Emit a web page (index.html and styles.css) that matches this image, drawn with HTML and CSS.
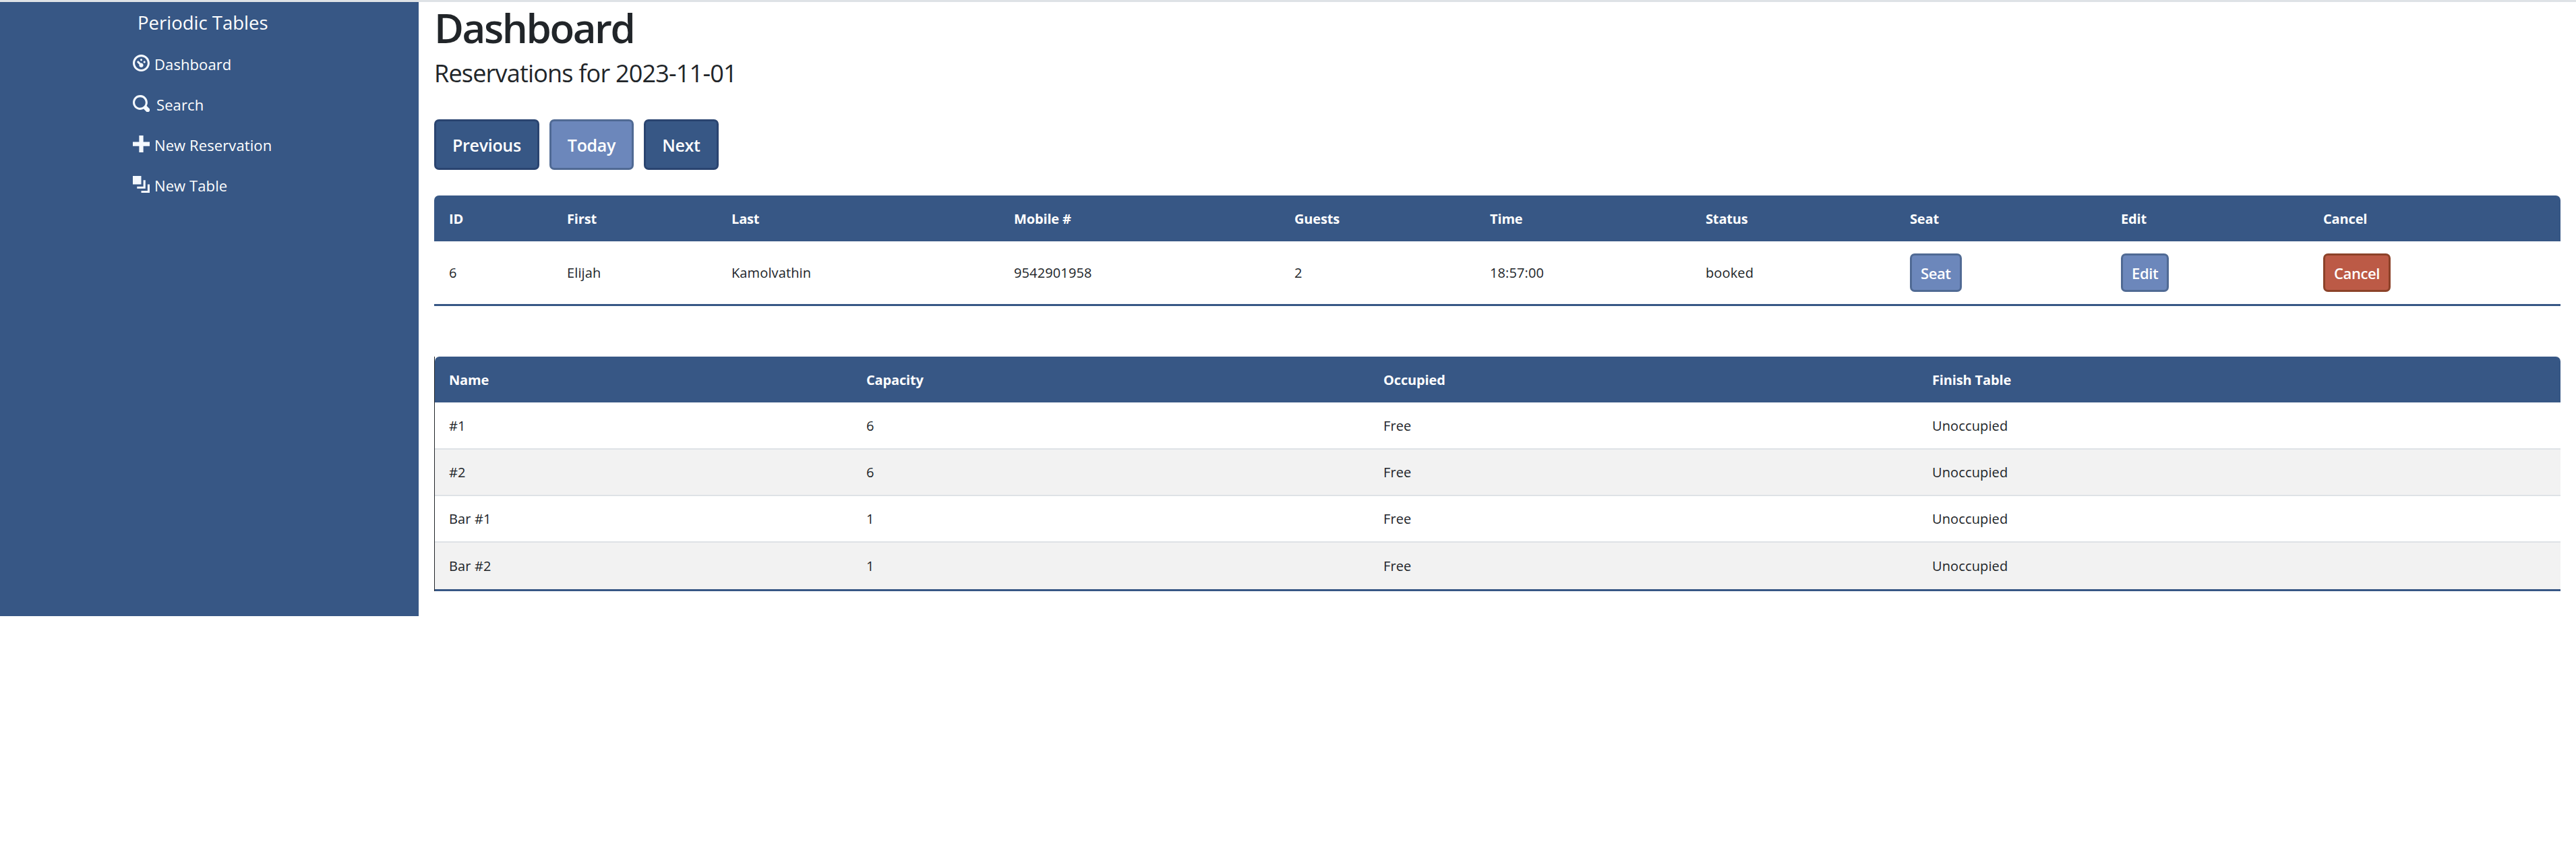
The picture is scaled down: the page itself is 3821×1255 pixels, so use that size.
FILE: index.html
```html
<!DOCTYPE html>
<html lang="en">

<head>
    <meta charset="UTF-8">
    <title>Periodic Tables</title>
    <link rel="stylesheet" href="styles.css">
</head>

<body>
    <div id="app">
        <!--SIDEBAR-->
        <nav class="sidebar">
            <div class="brand">Periodic Tables</div>
            <a class="nav-link" href="#">
                <svg class="nav-icon" viewBox="0 0 8 8"><path d="M4 0c-2.2 0-4 1.8-4 4s1.8 4 4 4 4-1.8 4-4-1.8-4-4-4zm0 1c1.66 0 3 1.34 3 3s-1.34 3-3 3-3-1.34-3-3 1.34-3 3-3zm0 1c-.28 0-.5.22-.5.5s.22.5.5.5.5-.22.5-.5-.22-.5-.5-.5zm-1.66 1a.5.5 0 0 0-.19.84l.91.91c-.02.08-.06.16-.06.25 0 .55.45 1 1 1s1-.45 1-1-.45-1-1-1c-.09 0-.17.04-.25.06l-.91-.91a.5.5 0 0 0-.44-.16.5.5 0 0 0-.06 0zm3.16 0c-.28 0-.5.22-.5.5s.22.5.5.5.5-.22.5-.5-.22-.5-.5-.5z"/></svg>
                Dashboard
            </a>
            <a class="nav-link nav-link-search" href="#">
                <svg class="nav-icon" viewBox="0 0 8 8"><path d="M3.5 0c-1.93 0-3.5 1.57-3.5 3.5s1.57 3.5 3.5 3.5c.59 0 1.17-.14 1.66-.41a1 1 0 0 0 .13.13l1 1a1.02 1.02 0 1 0 1.44-1.44l-1-1a1 1 0 0 0-.16-.13c.27-.49.44-1.06.44-1.66 0-1.93-1.57-3.5-3.5-3.5zm0 1c1.39 0 2.5 1.11 2.5 2.5 0 .66-.24 1.27-.66 1.72-.01.01-.02.02-.03.03a1 1 0 0 0-.13.13c-.44.4-1.04.63-1.69.63-1.39 0-2.5-1.11-2.5-2.5s1.11-2.5 2.5-2.5z"/></svg>
                Search
            </a>
            <a class="nav-link" href="#">
                <svg class="nav-icon" viewBox="0 0 8 8"><path d="M3 0v3h-3v2h3v3h2v-3h3v-2h-3v-3h-2z"/></svg>
                New Reservation
            </a>
            <a class="nav-link" href="#">
                <svg class="nav-icon" viewBox="0 0 8 8"><path d="M0 0v4h4v-4h-4zm5 2v3h-3v1h4v-4h-1zm2 2v3h-3v1h4v-4h-1z"/></svg>
                New Table
            </a>
        </nav>

        <main class="content">
            <h1>Dashboard</h1>
            <h4>Reservations for 2023-11-01</h4>

            <div class="date-nav">
                <button class="btn btn-dark-blue">Previous</button>
                <button class="btn btn-light-blue">Today</button>
                <button class="btn btn-dark-blue">Next</button>
            </div>

            <!--RESERVATIONS-->
            <table class="data-table reservations">
                <thead>
                    <tr>
                        <th>ID</th>
                        <th>First</th>
                        <th>Last</th>
                        <th>Mobile #</th>
                        <th>Guests</th>
                        <th>Time</th>
                        <th>Status</th>
                        <th>Seat</th>
                        <th>Edit</th>
                        <th>Cancel</th>
                    </tr>
                </thead>
                <tbody>
                    <tr>
                        <td>6</td>
                        <td>Elijah</td>
                        <td>Kamolvathin</td>
                        <td>9542901958</td>
                        <td>2</td>
                        <td>18:57:00</td>
                        <td>booked</td>
                        <td><button class="btn-small btn-light-blue">Seat</button></td>
                        <td><button class="btn-small btn-light-blue">Edit</button></td>
                        <td><button class="btn-small btn-red">Cancel</button></td>
                    </tr>
                </tbody>
            </table>

            <!--TABLES-->
            <table class="data-table tables">
                <thead>
                    <tr>
                        <th>Name</th>
                        <th>Capacity</th>
                        <th>Occupied</th>
                        <th>Finish Table</th>
                    </tr>
                </thead>
                <tbody>
                    <tr>
                        <td>#1</td>
                        <td>6</td>
                        <td>Free</td>
                        <td>Unoccupied</td>
                    </tr>
                    <tr>
                        <td>#2</td>
                        <td>6</td>
                        <td>Free</td>
                        <td>Unoccupied</td>
                    </tr>
                    <tr>
                        <td>Bar #1</td>
                        <td>1</td>
                        <td>Free</td>
                        <td>Unoccupied</td>
                    </tr>
                    <tr>
                        <td>Bar #2</td>
                        <td>1</td>
                        <td>Free</td>
                        <td>Unoccupied</td>
                    </tr>
                </tbody>
            </table>
        </main>
    </div>
</body>

</html>
```

FILE: styles.css
```css
* {
    margin: 0;
    padding: 0;
    box-sizing: border-box;
}

body {
    font-family: "Open Sans", sans-serif;
    background: #fff;
    color: #212529;
}

#app {
    display: flex;
    align-items: flex-start;
    border-top: 3px solid #dee2e6;
}

.sidebar {
    width: 621px;
    height: 911px;
    flex-shrink: 0;
    padding-left: 197px;
    background: #375785;
    color: #fff;
}

.brand {
    height: 62px;
    padding-left: 7px;
    font-size: 27.5px;
    line-height: 62px;
}

.nav-link {
    display: flex;
    align-items: center;
    gap: 7px;
    height: 60px;
    color: #fff;
    font-size: 22px;
    letter-spacing: 0.1px;
    text-decoration: none;
}

.nav-link-search {
    gap: 10px;
}

.nav-icon {
    width: 25px;
    height: 25px;
    margin-top: -4px;
    fill: #f4f9ff;
}

.content {
    flex: 1;
    padding: 0 23px 0 23px;
}

h1 {
    height: 84px;
    font-size: 60px;
    font-weight: 600;
    line-height: 77px;
    letter-spacing: -2.4px;
}

h4 {
    height: 50px;
    font-size: 36px;
    font-weight: 500;
    line-height: 44px;
    letter-spacing: -0.8px;
}

.date-nav {
    display: flex;
    gap: 15px;
    margin-top: 40px;
}

.btn {
    height: 75px;
    padding: 0 24px;
    border: 3px solid;
    border-radius: 7px;
    color: #fff;
    font-family: inherit;
    font-size: 25px;
    font-weight: 600;
    letter-spacing: -0.3px;
}

.btn-small {
    height: 57px;
    padding: 0 13px;
    border: 3px solid;
    border-radius: 7px;
    color: #fff;
    font-family: inherit;
    font-size: 22px;
    font-weight: 600;
    letter-spacing: -0.4px;
}

.btn-dark-blue {
    background: #375785;
    border-color: #2a4470;
}

.btn-light-blue {
    background: #6c87bb;
    border-color: #506a94;
}

.btn-red {
    background: #bc5a46;
    border-color: #8c4229;
}

.data-table {
    width: 3154px;
    table-layout: fixed;
    border-collapse: separate;
    border-spacing: 0;
    font-size: 20px;
    letter-spacing: 0.12px;
}

.data-table th {
    height: 68px;
    padding: 0 22px;
    background: #375785;
    color: #fff;
    font-weight: 700;
    letter-spacing: -0.15px;
    text-align: left;
}

.data-table th:first-child {
    border-top-left-radius: 7px;
}

.data-table th:last-child {
    border-top-right-radius: 7px;
}

.data-table td {
    height: 69px;
    padding: 0 22px;
    border-bottom: 2px solid #dee2e6;
}

.data-table tr:last-child td {
    height: 72px;
    border-bottom: 3px solid #375785;
}

.reservations {
    margin-top: 38px;
}

.reservations td,
.reservations tr:last-child td {
    height: 96px;
}

.reservations th:nth-child(1) { width: 175px; }
.reservations th:nth-child(2) { width: 244px; }
.reservations th:nth-child(3) { width: 419px; }
.reservations th:nth-child(4) { width: 416px; }
.reservations th:nth-child(5) { width: 290px; }
.reservations th:nth-child(6) { width: 320px; }
.reservations th:nth-child(7) { width: 303px; }
.reservations th:nth-child(8) { width: 313px; }
.reservations th:nth-child(9) { width: 300px; }
.reservations th:nth-child(10) { width: 374px; }

.tables {
    margin-top: 75px;
    border-left: 1px solid #212529;
}

.tables th:first-child,
.tables td:first-child {
    padding-left: 21px;
}

.tables tbody tr:first-child td {
    height: 70px;
}

.tables th:nth-child(1) { width: 618px; }
.tables th:nth-child(2) { width: 767px; }
.tables th:nth-child(3) { width: 814px; }
.tables th:nth-child(4) { width: 954px; }

.tables tbody tr:nth-child(even) {
    background: #f2f2f2;
}
```
